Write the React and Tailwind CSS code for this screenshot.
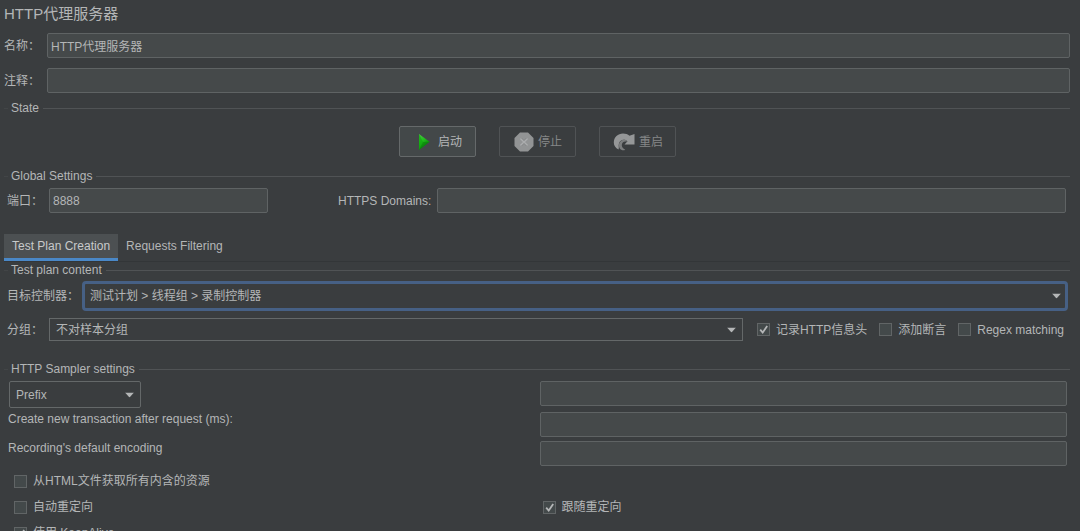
import { useState } from "react";

// Titled separator used at the top of every settings group
const GroupTitle = ({ children, className = "" }) => (
  <div className={`flex h-4 items-center ${className}`}>
    <span className="h-px w-1 bg-[#424547]" />
    <h2 className="pr-1 pl-[3px] leading-4">{children}</h2>
    <span className="h-px flex-1 bg-[#505355]" />
  </div>
);

const TextField = ({ className = "", ...props }) => (
  <input
    type="text"
    className={`h-[25px] min-w-0 rounded-xs border border-[#5f6364] bg-[#45494a] px-[3px] outline-none ${className}`}
    {...props}
  />
);

const Dropdown = ({ className = "", selectClass = "", options, ...props }) => (
  <div className={`relative ${className}`}>
    <select className={`block w-full appearance-none bg-[#3a3d3f] outline-none ${selectClass}`} {...props}>
      {options.map((option) => (
        <option key={option}>{option}</option>
      ))}
    </select>
    <svg
      viewBox="0 0 9 5"
      className="pointer-events-none absolute top-1/2 right-[7px] h-[5px] w-[9px] -translate-y-1/2 fill-[#b4b6b7]"
    >
      <path d="M0 0h9L4.5 5z" />
    </svg>
  </div>
);

const CheckBox = ({ label, defaultChecked = false }) => {
  const [checked, setChecked] = useState(defaultChecked);

  return (
    <label className="flex h-4 items-center gap-1.5 whitespace-nowrap">
      <span className="relative h-[13px] w-[13px]">
        <input
          type="checkbox"
          checked={checked}
          onChange={(e) => setChecked(e.target.checked)}
          className="block h-[13px] w-[13px] appearance-none border border-[#616566] bg-[#43494a]"
        />
        {checked && (
          <svg viewBox="0 0 13 13" className="pointer-events-none absolute inset-0 h-[13px] w-[13px]" fill="none">
            <path d="M3.2 6.6l2.500 3L10.2 3" stroke="#b4b6b7" strokeWidth="1.8" />
          </svg>
        )}
      </span>
      {label}
    </label>
  );
};

const StartIcon = () => (
  <svg viewBox="0 0 12 18" className="h-[18px] w-3">
    <defs>
      <linearGradient id="start" x1="0" y1="0" x2="0.5" y2="1">
        <stop offset="0" stopColor="#4fc44a" />
        <stop offset="0.45" stopColor="#22c01c" />
        <stop offset="1" stopColor="#067a08" />
      </linearGradient>
    </defs>
    <path d="M1 1l10.500 7.800L1 17z" fill="url(#start)" />
    <path d="M1 1l4 8-4 8z" fill="#0fa50e" opacity="0.6" />
    <path d="M5 9l6.500-.2L1 17z" fill="#067a08" opacity="0.5" />
  </svg>
);

const StopIcon = () => (
  <svg viewBox="0 0 20 20" className="h-5 w-5">
    <path d="M6 .5h8L19.500 6v8L14 19.500H6L.5 14V6z" fill="#929495" />
    <path d="M6.500 6.500l7 7M13.500 6.500l-7 7" stroke="#abadae" strokeWidth="1.6" />
    <path d="M7.500 6l2.500 2.500L12.500 6M7.500 14l2.500-2.500 2.500 2.500" stroke="#7f8182" strokeWidth="0.7" fill="none" />
  </svg>
);

const RestartIcon = () => (
  <svg viewBox="0 0 22 20" className="h-5 w-[22px]">
    {/* outer arrow */}
    <path
      d="M5.500 17.500C2.500 16 .8 13.500.8 10.500.8 5 5 1.500 10 1.500c2.600 0 4.800.8 6.500 2.300L21.500 2v10.500H11.500l3-3.200C13.300 8 11.600 7.400 10 7.800c-2.800.6-4.500 3-4.300 6 .1 1.500.2 2.700-.2 3.700z"
      fill="#959798"
    />
    {/* shaded inner edge of the loop */}
    <path
      d="M14.500 9.300C12.800 7.500 10.300 7.200 8.200 8.700c-2.200 1.600-2.800 4.300-1.900 6.800.5 1.400 1.600 2.300 3 2.700 1.100.2 2.200 0 3-.5-2.300-.9-3.500-2.500-3.500-4.400 0-2.300 1.700-4 4.200-3.700z"
      fill="#7b7d7e"
    />
  </svg>
);

const ActionButton = ({ icon, children, disabled = false }) => (
  <button
    type="button"
    disabled={disabled}
    className="flex h-[31px] w-[77px] items-center justify-center gap-1 rounded-xs border border-[#65696a] bg-[#434849] pl-0.5 disabled:border-[#505355] disabled:bg-transparent disabled:text-[#858788]"
  >
    {icon}
    {children}
  </button>
);

const App = () => {
  const [tab, setTab] = useState("creation");

  const tabClass = (name) =>
    `h-[27px] border-b-3 px-2 ${
      tab === name ? "border-[#4a88c7] bg-[#4c5052] text-[#c8cacb]" : "border-transparent"
    }`;

  return (
    <div className="h-screen overflow-hidden bg-[#3a3d3f] font-['Liberation_Sans','Noto_Sans_CJK_SC',sans-serif] text-xs leading-4 text-[#b4b6b7]">
      <h1 className="px-1 pt-0.5 text-[15px] leading-6">HTTP代理服务器</h1>

      {/* Name and comment */}
      <div className="mt-[7px] flex flex-col gap-2.5 pr-2.5 pl-1">
        <div className="flex items-center gap-[7px]">
          <label htmlFor="name" className="w-9 whitespace-nowrap">名称：</label>
          <TextField id="name" defaultValue="HTTP代理服务器" className="flex-1" />
        </div>
        <div className="flex items-center gap-[7px]">
          <label htmlFor="comment" className="w-9 whitespace-nowrap">注释：</label>
          <TextField id="comment" className="flex-1" />
        </div>
      </div>

      <div className="pr-2.5 pl-1">
        {/* State */}
        <GroupTitle className="mt-[7px]">State</GroupTitle>
        <div className="mt-2.5 flex justify-center gap-[23px]">
          <ActionButton icon={<span className="px-1"><StartIcon /></span>}>启动</ActionButton>
          <ActionButton icon={<StopIcon />} disabled>停止</ActionButton>
          <ActionButton icon={<RestartIcon />} disabled>重启</ActionButton>
        </div>

        {/* Global settings */}
        <GroupTitle className="mt-[11px]">Global Settings</GroupTitle>
        <div className="mt-1 flex items-center pr-1 pl-[3px]">
          <label htmlFor="port" className="w-[42px] whitespace-nowrap">端口：</label>
          <TextField id="port" defaultValue="8888" className="w-[219px]" />
          <label htmlFor="domains" className="mr-1.5 ml-[70px]">HTTPS Domains:</label>
          <TextField id="domains" className="flex-1" />
        </div>

        {/* Tabs */}
        <div role="tablist" className="mt-[21px] flex border-b border-[#333638]">
          <button type="button" role="tab" aria-selected={tab === "creation"} onClick={() => setTab("creation")} className={tabClass("creation")}>
            Test Plan Creation
          </button>
          <button type="button" role="tab" aria-selected={tab === "filtering"} onClick={() => setTab("filtering")} className={tabClass("filtering")}>
            Requests Filtering
          </button>
        </div>

        {/* Test plan content */}
        <GroupTitle>Test plan content</GroupTitle>
        <div className="mt-[3px] flex items-center pr-0.5 pl-[3px]">
          <label htmlFor="target" className="w-[75px] whitespace-nowrap">目标控制器：</label>
          <Dropdown
            id="target"
            className="flex-1"
            selectClass="h-[30px] rounded-sm border-3 border-[#466085] px-[5px]"
            options={["测试计划 > 线程组 > 录制控制器"]}
          />
        </div>
        <div className="mt-[7px] flex items-center pr-1.5 pl-[3px]">
          <label htmlFor="grouping" className="w-[42px] whitespace-nowrap">分组：</label>
          <Dropdown
            id="grouping"
            className="mr-3.5 flex-1"
            selectClass="h-[23px] border border-[#646869] px-1.5"
            options={["不对样本分组"]}
          />
          <div className="flex gap-3">
            <CheckBox label="记录HTTP信息头" defaultChecked />
            <CheckBox label="添加断言" />
            <CheckBox label="Regex matching" />
          </div>
        </div>

        {/* HTTP sampler settings */}
        <GroupTitle className="mt-5">HTTP Sampler settings</GroupTitle>
        <div className="mt-1 grid grid-cols-2 items-start gap-1 pr-[3px] pl-1">
          <Dropdown
            aria-label="Prefix"
            className="ml-px w-[132px]"
            selectClass="h-[27px] rounded-xs border border-[#646869] px-1.5"
            options={["Prefix"]}
          />
          <TextField aria-label="Prefix" />
          <label htmlFor="transaction" className="leading-[14px]">Create new transaction after request (ms):</label>
          <TextField id="transaction" />
          <label htmlFor="encoding" className="leading-[14px]">Recording's default encoding</label>
          <TextField id="encoding" />
        </div>
        <div className="mt-[7px] grid grid-cols-2 gap-x-1 gap-y-2.5 pr-[3px] pl-2.5">
          <div className="col-span-2">
            <CheckBox label="从HTML文件获取所有内含的资源" />
          </div>
          <CheckBox label="自动重定向" />
          <CheckBox label="跟随重定向" defaultChecked />
          <CheckBox label="使用 KeepAlive" defaultChecked />
        </div>
      </div>
    </div>
  );
};

export default App;
